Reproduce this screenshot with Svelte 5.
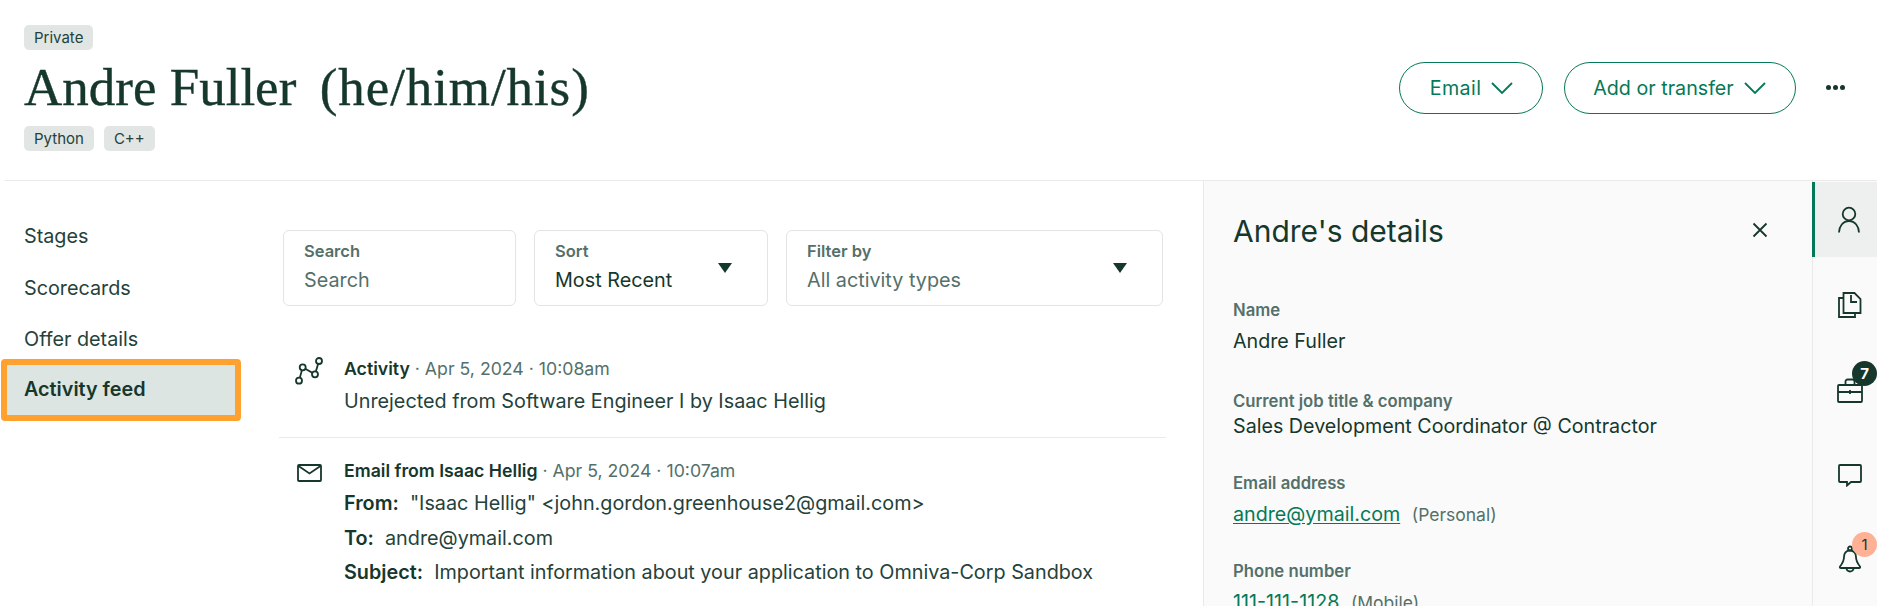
<script>
  const tags = ['Python', 'C++'];
  const navItems = ['Stages', 'Scorecards', 'Offer details'];
</script>

<div class="page">
  <header class="top">
    <div class="who">
      <span class="tag">Private</span>
      <h1>Andre Fuller&nbsp; <span class="pronouns">(he/him/his)</span></h1>
      <div class="tags">
        {#each tags as tag}
          <span class="tag">{tag}</span>
        {/each}
      </div>
    </div>
    <div class="actions">
      <button class="pill email">
        Email
        <svg width="24" height="14" viewBox="0 0 24 14"><path d="M2 2 12 12 22 2" /></svg>
      </button>
      <button class="pill transfer">
        Add or transfer
        <svg width="24" height="14" viewBox="0 0 24 14"><path d="M2 2 12 12 22 2" /></svg>
      </button>
      <div class="dots"><i></i><i></i><i></i></div>
    </div>
  </header>

  <div class="body">
    <nav class="side">
      {#each navItems as item}
        <a class="nav-link">{item}</a>
      {/each}
      <a class="nav-link active">Activity feed</a>
    </nav>

    <main class="feed">
      <div class="filters">
        <div class="field search">
          <div class="field-text">
            <label>Search</label>
            <span class="muted">Search</span>
          </div>
        </div>
        <div class="field sort">
          <div class="field-text">
            <label>Sort</label>
            <span>Most Recent</span>
          </div>
          <b class="caret"></b>
        </div>
        <div class="field filter">
          <div class="field-text">
            <label>Filter by</label>
            <span class="muted">All activity types</span>
          </div>
          <b class="caret"></b>
        </div>
      </div>

      <section class="entry first">
        <svg class="entry-icon" width="30" height="28" viewBox="0 0 30 28">
          <path d="M6 23.700 9.700 10.300 22 17.300 26 4" />
          <circle cx="6" cy="23.700" r="3" />
          <circle cx="9.700" cy="10.300" r="3" />
          <circle cx="22" cy="17.300" r="3" />
          <circle cx="26" cy="4" r="3" />
        </svg>
        <div class="entry-text">
          <p class="meta"><strong>Activity</strong> · Apr 5, 2024 · 10:08am</p>
          <p class="line">Unrejected from Software Engineer I by Isaac Hellig</p>
        </div>
      </section>

      <section class="entry second">
        <svg class="entry-icon" width="30" height="28" viewBox="0 0 30 28">
          <rect x="5" y="5" width="23" height="16" rx="1" />
          <path d="M5.500 6 16.500 13.500 27.500 6" />
        </svg>
        <div class="entry-text">
          <p class="meta"><strong>Email from Isaac Hellig</strong> · Apr 5, 2024 · 10:07am</p>
          <p class="line"><strong>From:</strong>&nbsp; "Isaac Hellig" &lt;john.gordon.greenhouse2@gmail.com&gt;</p>
          <p class="line"><strong>To:</strong>&nbsp; andre@ymail.com</p>
          <p class="line"><strong>Subject:</strong>&nbsp; Important information about your application to Omniva-Corp Sandbox</p>
        </div>
      </section>
    </main>

    <aside class="details">
      <div class="details-head">
        <h2>Andre's details</h2>
        <svg width="16" height="16" viewBox="0 0 16 16"><path d="M1.500 1.500 14.500 14.500M14.500 1.500 1.500 14.500" /></svg>
      </div>
      <dl>
        <dt>Name</dt>
        <dd>Andre Fuller</dd>
        <dt class="tight">Current job title &amp; company</dt>
        <dd class="tight">Sales Development Coordinator @ Contractor</dd>
        <dt>Email address</dt>
        <dd class="mail"><a href="#top">andre@ymail.com</a> <small>(Personal)</small></dd>
        <dt>Phone number</dt>
        <dd><a href="#top">111-111-1128</a> <small>(Mobile)</small></dd>
      </dl>
    </aside>

    <div class="rail">
      <div class="rail-btn selected">
        <svg width="24" height="28" viewBox="0 0 24 28">
          <circle cx="12" cy="8" r="6.300" />
          <path d="M2 26.500c0-6 4-11.500 10-11.500s10 5.500 10 11.500" />
        </svg>
      </div>
      <div class="rail-btn">
        <svg width="24" height="28" viewBox="0 0 24 28">
          <path d="M5.500 2h11l6 6v14h-17z" />
          <path d="M5.500 7h-4.500v19h16v-4" />
          <path d="M13 4v7h6" />
        </svg>
      </div>
      <div class="rail-btn">
        <svg width="26" height="28" viewBox="0 0 26 28">
          <rect x="1" y="9" width="24" height="17" rx="1" />
          <path d="M8.500 9V5.500a2 2 0 0 1 2-2h5a2 2 0 0 1 2 2V9M1 16h24M13 14v4" />
        </svg>
        <span class="badge dark">7</span>
      </div>
      <div class="rail-btn">
        <svg width="24" height="24" viewBox="0 0 24 24">
          <path d="M2 2h20a1 1 0 0 1 1 1v15a1 1 0 0 1-1 1h-9l-4 3.500v-3.500h-7a1 1 0 0 1-1-1v-15a1 1 0 0 1 1-1z" />
        </svg>
      </div>
      <div class="rail-btn bell">
        <svg width="24" height="28" viewBox="0 0 24 28">
          <circle cx="12" cy="3.500" r="2" />
          <path d="M12 5.500c-4 0-6 3-6 6.500 0 4.500-2 7-4 9.500-.5 1 0 1.500 1 1.500h18c1 0 1.500-.5 1-1.500-2-2.500-4-5-4-9.500 0-3.500-2-6.500-6-6.500z" />
          <path d="M8.500 23.500a3.500 3 0 0 0 7 0" />
        </svg>
        <span class="badge peach">1</span>
      </div>
    </div>
  </div>
</div>

<style>
  :global(body) {
    margin: 0;
    background: #fff;
  }
  .page {
    height: 606px;
    overflow: hidden;
    font-family: Inter, "Liberation Sans", sans-serif;
    color: #15372c;
  }
  .top {
    height: 181px;
    box-sizing: border-box;
    margin-left: 5px;
    padding: 25px 32px 0 19px;
    display: flex;
    justify-content: space-between;
    border-bottom: 1px solid #eaeaea;
  }
  .tag {
    display: inline-block;
    height: 25px;
    line-height: 25px;
    padding: 0 10px;
    background: #e1e5e4;
    border-radius: 5px;
    font-size: 15px;
    color: #24423a;
  }
  h1 {
    margin: 9px 0 10px;
    font-family: "Liberation Serif", serif;
    font-weight: 400;
    font-size: 53px;
    line-height: 57px;
    white-space: nowrap;
    -webkit-text-stroke: 0.4px #15372c;
  }
  .pronouns {
    margin-left: -3px;
    letter-spacing: 0.9px;
  }
  .tags {
    display: flex;
    gap: 10px;
  }
  .actions {
    display: flex;
    align-items: flex-start;
    padding-top: 37px;
    gap: 21px;
  }
  .pill {
    height: 52px;
    box-sizing: border-box;
    display: flex;
    align-items: center;
    justify-content: center;
    gap: 9px;
    background: #fff;
    border: 1px solid #047957;
    border-radius: 26px;
    color: #047957;
    font: 400 19.700px Inter, "Liberation Sans", sans-serif;
  }
  .pill svg path {
    fill: none;
    stroke: #047957;
    stroke-width: 1.800;
  }
  .email { width: 144px; padding-left: 8px; letter-spacing: 0.4px; }
  .transfer { width: 232px; }
  .dots {
    display: flex;
    gap: 2px;
    margin: 23px 0 0 9px;
  }
  .dots i {
    width: 5px;
    height: 5px;
    border-radius: 50%;
    background: #15372c;
  }
  .body {
    display: flex;
    height: 425px;
  }
  .side {
    width: 240px;
    flex: none;
    margin-left: 1px;
    padding-top: 30px;
    display: flex;
    flex-direction: column;
  }
  .nav-link {
    display: block;
    padding-left: 23px;
    height: 51.500px;
    line-height: 51.500px;
    font-size: 19.800px;
    color: #24423a;
  }
  .nav-link.active {
    box-sizing: border-box;
    height: 62px;
    line-height: 48px;
    padding-left: 17px;
    margin-top: -7px;
    background: #dce5e1;
    border: 6px solid #ffa12e;
    border-radius: 4px;
    font-weight: 600;
    color: #15372c;
  }
  .feed {
    width: 887px;
    flex: none;
    margin-left: 38px;
    padding-top: 49px;
  }
  .filters {
    display: flex;
    gap: 18px;
    padding-left: 4px;
  }
  .field {
    height: 76px;
    box-sizing: border-box;
    border: 1px solid #e1e5e4;
    border-radius: 6px;
    padding: 0 35px 0 20px;
    display: flex;
    align-items: center;
    justify-content: space-between;
  }
  .field-text {
    display: flex;
    flex-direction: column;
    gap: 7px;
    padding-bottom: 3px;
    font-size: 19.800px;
    line-height: 24px;
  }
  .field label {
    font-size: 16.500px;
    line-height: 20px;
    font-weight: 600;
    color: #54706a;
  }
  .muted { color: #54706a; }
  .search { width: 233px; }
  .sort { width: 234px; }
  .filter { width: 377px; }
  .caret {
    width: 0;
    height: 0;
    border-style: solid;
    border-color: #15372c transparent transparent;
    border-width: 10px 7px 0;
  }
  .entry {
    display: flex;
  }
  .entry p {
    margin: 0;
  }
  .first {
    margin-top: 52px;
    height: 80px;
    border-bottom: 1px solid #eaeaea;
    box-sizing: border-box;
  }
  .first .entry-icon {
    margin-top: -1px;
  }
  .second {
    padding-top: 22px;
  }
  .entry-icon {
    flex: none;
    margin: 0 21px 0 14px;
  }
  .entry-icon * {
    fill: none;
    stroke: #15372c;
    stroke-width: 1.800;
  }
  .entry-icon circle {
    fill: #fff;
  }
  .meta {
    font-size: 17.700px;
    line-height: 22px;
    margin-bottom: 4px !important;
    color: #54706a;
  }
  .meta strong {
    font-weight: 600;
    color: #15372c;
  }
  .line {
    font-size: 19.800px;
    line-height: 34.500px;
    color: #24423a;
    white-space: nowrap;
  }
  .line strong {
    font-weight: 600;
    color: #15372c;
  }
  .details {
    width: 609px;
    flex: none;
    margin-left: 37px;
    box-sizing: border-box;
    padding: 0 0 0 29px;
    background: #fafafa;
    border-left: 1px solid #eaeaea;
  }
  .details-head {
    display: flex;
    justify-content: space-between;
    align-items: center;
    height: 100px;
    padding-right: 44px;
  }
  .details-head svg {
    margin-bottom: 2px;
  }
  .details-head svg path {
    fill: none;
    stroke: #15372c;
    stroke-width: 1.800;
  }
  h2 {
    margin: 0;
    font-size: 30px;
    font-weight: 400;
  }
  dl {
    margin: 19px 0 0;
  }
  dt {
    font-size: 16.700px;
    line-height: 20px;
    font-weight: 600;
    color: #54706a;
  }
  dd {
    margin: 9px 0 35px;
    font-size: 19.700px;
    line-height: 24px;
    white-space: nowrap;
  }
  dt.tight { margin-top: 38px; }
  dd.tight { margin: 3px 0 35px; }
  dd.mail { margin-bottom: 34px; }
  dd a {
    color: #047957;
    text-decoration: underline;
    text-underline-offset: 2px;
  }
  small {
    font-size: 17.500px;
    color: #54706a;
    margin-left: 6px;
  }
  .rail {
    flex: 1;
    background: #fafafa;
    border-left: 1px solid #eaeaea;
  }
  .rail-btn {
    position: relative;
    height: 85px;
    display: flex;
    align-items: center;
    justify-content: center;
    padding-left: 9px;
    box-sizing: border-box;
  }
  .rail-btn.selected {
    height: 75px;
    background: #eef0ef;
    border-left: 3px solid #047957;
    margin: 1px 0 5px -1px;
    padding-left: 6px;
  }
  .rail-btn.bell svg {
    margin-top: -2px;
  }
  .rail-btn svg * {
    fill: none;
    stroke: #15372c;
    stroke-width: 1.800;
  }
  .badge {
    position: absolute;
    top: 14px;
    right: 0;
    width: 25px;
    height: 25px;
    border-radius: 50%;
    text-align: center;
    line-height: 25px;
    font-size: 15px;
  }
  .dark {
    background: #15372c;
    color: #fff;
    font-weight: 700;
  }
  .peach {
    top: 15px;
    background: #ffb196;
    color: #15372c;
  }
</style>
